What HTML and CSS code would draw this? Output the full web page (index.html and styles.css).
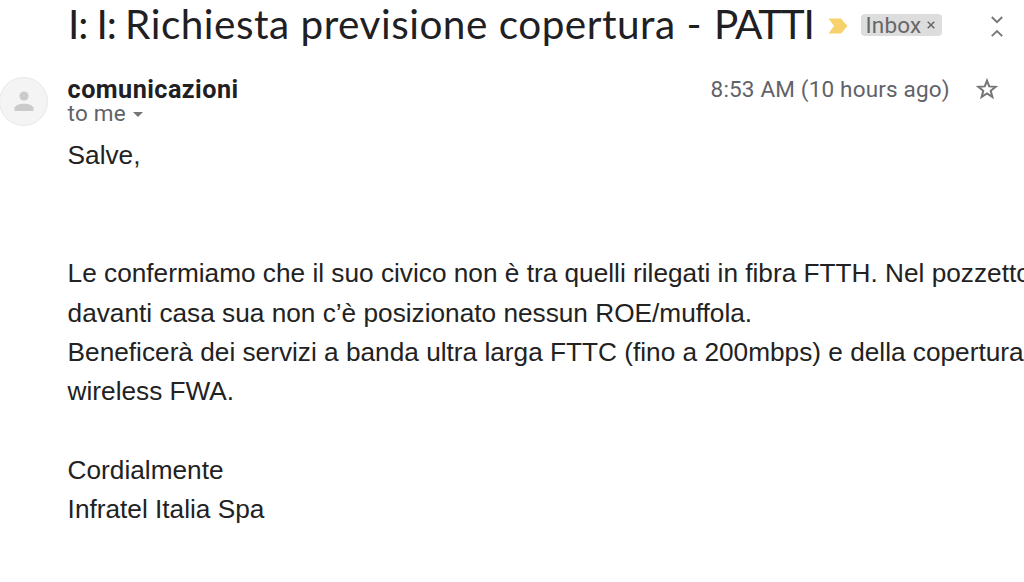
FILE: index.html
```html
<!DOCTYPE html>
<html lang="it">
	<head>
		<meta charset="utf-8">
		<title>Richiesta previsione copertura</title>

		<link rel="stylesheet" href="styles.css">
	</head>
	<body>
		<div class="subject">
			<h1><span class="prefix">I: I: </span>Richiesta previsione copertura - <span class="place">PATTI</span></h1>
			<svg class="important" width="20" height="16" viewBox="0 0 20 16">
				<path d="M0.5 0.5H13L19.5 8L13 15.5H0.5L6 8Z" fill="#f7d26c"/>
			</svg>
			<div class="label">
				<span class="label-name">Inbox</span>
				<svg width="8" height="8" viewBox="0 0 8 8">
					<path d="M0.7 0.7L7.3 7.3M7.3 0.7L0.7 7.3" stroke="#666" stroke-width="1.5"/>
				</svg>
			</div>
			<svg class="collapse" width="12" height="22" viewBox="0 0 12 22">
				<path d="M0.8 1L6 6.2L11.2 1M0.8 20.2L6 15L11.2 20.2" fill="none" stroke="#777" stroke-width="1.9"/>
			</svg>
		</div>
		<div class="message">
			<div class="avatar">
				<svg width="20" height="20" viewBox="0 0 20 20" fill="#cbcbcb">
					<circle cx="10" cy="5" r="4.6"/>
					<path d="M0.5 20V17.3C0.5 14 6.5 12.7 10 12.7S19.5 14 19.5 17.3V20Z"/>
				</svg>
			</div>
			<div class="content">
				<div class="header">
					<div class="from">
						<div class="name">comunicazioni</div>
						<div class="to">to me <span class="arrow"></span></div>
					</div>
					<div class="time">8:53 AM (10 hours ago)</div>
					<svg class="star" width="22" height="22" viewBox="0 0 22 22">
						<path d="M11 2.6L13.2 8.4L19.6 8.8L14.7 12.8L16.4 19L11 15.5L5.6 19L7.3 12.8L2.4 8.8L8.8 8.4Z" fill="none" stroke="#757575" stroke-width="2"/>
					</svg>
				</div>
				<div class="text">
					Salve,<br>
					<br>
					<br>
					Le confermiamo che il suo civico non è tra quelli rilegati in fibra FTTH. Nel pozzetto<br>
					davanti casa sua non c’è posizionato nessun ROE/muffola.<br>
					Beneficerà dei servizi a banda ultra larga FTTC (fino a 200mbps) e della copertura<br>
					wireless FWA.<br>
					<br>
					Cordialmente<br>
					Infratel Italia Spa
				</div>
			</div>
		</div>
	</body>
</html>
```
FILE: styles.css
```css
* {
	margin: 0;
	padding: 0;
	box-sizing: border-box;
}

body {
	background: #fff;
	overflow: hidden;
	font-family: Roboto, "Liberation Sans", sans-serif;
}

svg {
	display: block;
	flex: none;
}

.subject {
	display: flex;
	height: 77px;
	padding-left: 68px;
}

h1 {
	width: 760px;
	font-family: Lato, sans-serif;
	font-size: 40.5px;
	font-weight: 400;
	line-height: 48px;
	letter-spacing: 0.5px;
	white-space: nowrap;
	color: #1f2024;
}

.prefix {
	letter-spacing: -1.1px;
}

.place {
	margin-left: 1px;
	letter-spacing: -1.3px;
}

.important {
	margin-top: 18px;
}

.label {
	display: flex;
	align-items: center;
	width: 81px;
	height: 22px;
	margin: 14px 0 0 12.5px;
	padding-left: 5px;
	border-radius: 4px;
	background: #ddd;
	color: #666;
}

.label-name {
	width: 61px;
	font-size: 22.5px;
	line-height: 22px;
	letter-spacing: 0.2px;
}

.collapse {
	margin: 16px 0 0 49.5px;
}

.message {
	display: flex;
}

.avatar {
	display: flex;
	flex: none;
	justify-content: center;
	width: 49px;
	height: 49px;
	margin-left: -1px;
	padding-top: 13px;
	border: 1px solid #e8e8e8;
	border-radius: 50%;
	background: #f4f4f4;
}

.content {
	margin-left: 19.6px;
}

.header {
	display: flex;
	width: 956px;
	height: 59.4px;
}

.from {
	width: 643px;
}

.name {
	font-size: 25.2px;
	font-weight: 700;
	line-height: 26px;
	letter-spacing: 0.45px;
	color: #1f2024;
}

.to {
	display: flex;
	align-items: center;
	font-size: 22.5px;
	line-height: 21px;
	letter-spacing: 0.2px;
	color: #5f6368;
}

.arrow {
	margin: 1px 0 0 7px;
	border: 5px solid transparent;
	border-top-color: #757575;
	border-bottom: 0;
}

.time {
	width: 265px;
	font-size: 22.5px;
	line-height: 24px;
	letter-spacing: 0.17px;
	white-space: nowrap;
	color: #5f6368;
}

.star {
	margin-top: 1px;
}

.text {
	font-family: "Liberation Sans", Arial, sans-serif;
	font-size: 26.22px;
	line-height: 39.3px;
	white-space: nowrap;
	color: #222;
}
```
